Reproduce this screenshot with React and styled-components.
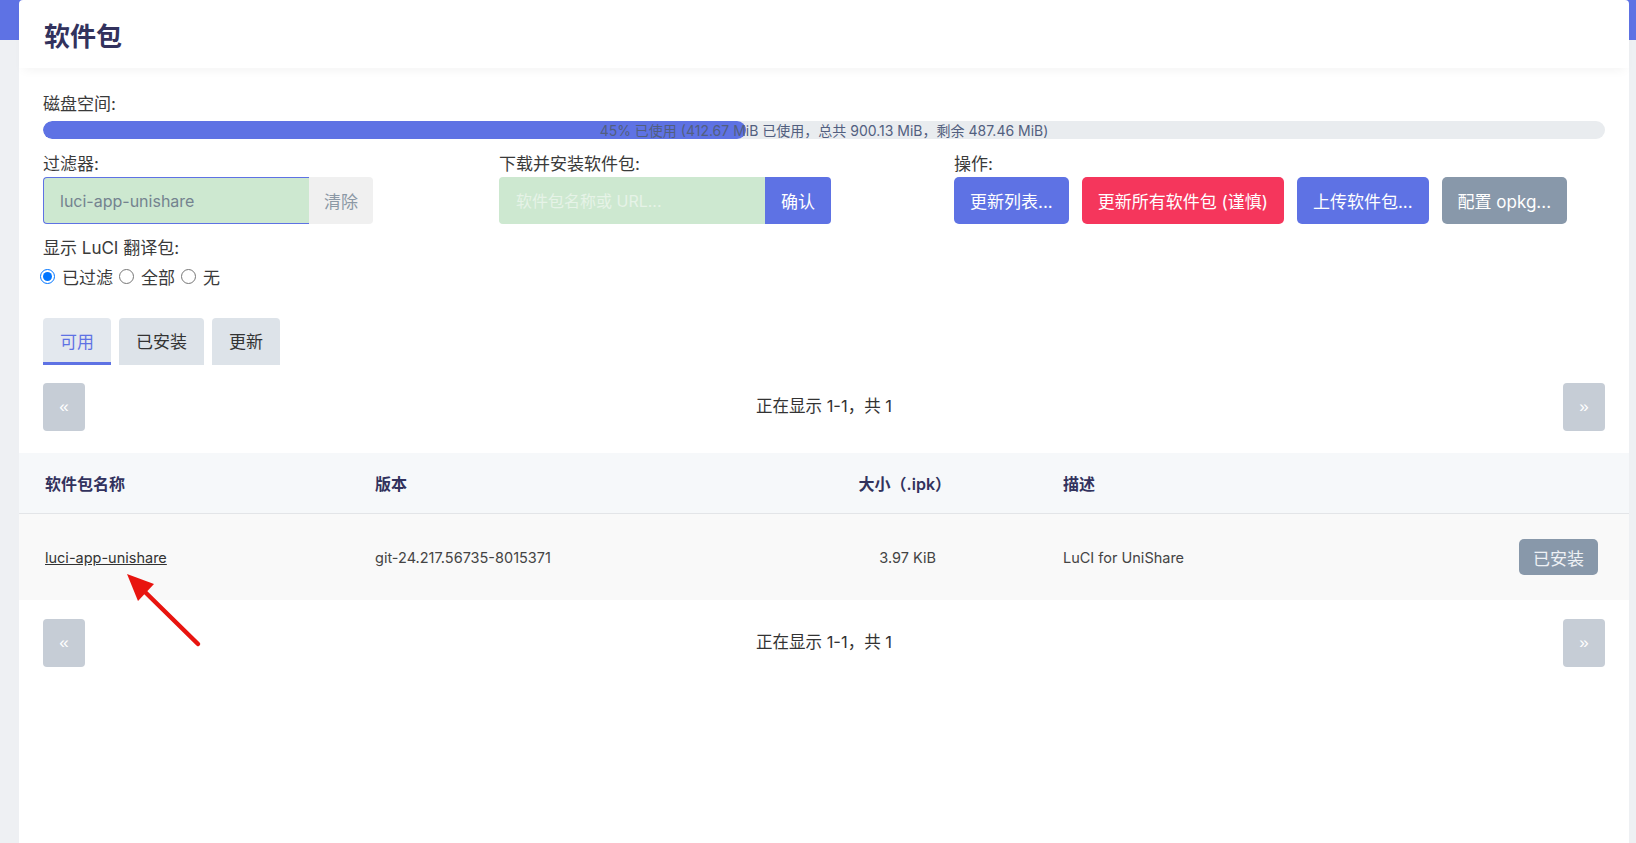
import styled, { createGlobalStyle } from "styled-components";

const GlobalStyle = createGlobalStyle`
  html, body {
    margin: 0;
    padding: 0;
  }
  body {
    font-family: Inter, "Noto Sans CJK SC", sans-serif;
    color: #333;
    background: #eef0f3;
  }
  * { box-sizing: border-box; }
`;

const Page = styled.div`
  min-height: 100vh;
  padding: 0 7px 0 19px;
  background: linear-gradient(#5e72e4 0 40px, #eef0f3 40px);
`;

const Card = styled.div`
  position: relative;
  min-height: 100vh;
  background: #fff;
  border-radius: 4px 4px 0 0;
`;

const CardHeader = styled.div`
  height: 68px;
  display: flex;
  align-items: center;
  padding: 0 25px;
  box-shadow: 0 6px 10px -4px rgba(0, 0, 0, 0.05);
`;

const Title = styled.h2`
  margin: 0;
  font-size: 26px;
  font-weight: 700;
  color: #32325d;
`;

const Section = styled.div`
  padding: ${(p) => p.$pad || "24px 24px 0"};
`;

const Label = styled.div`
  font-size: 17px;
  line-height: 24px;
  color: #3a3a3a;
  margin-bottom: ${(p) => p.$mb || "0"};
  margin-top: ${(p) => p.$mt || "0"};
`;

const Bar = styled.div`
  position: relative;
  margin-top: 5px;
  height: 18px;
  border-radius: 9px;
  background: #e9ecef;
  display: flex;
  align-items: center;
  justify-content: center;
  overflow: hidden;
`;

const Fill = styled.div`
  position: absolute;
  left: 0;
  top: 0;
  bottom: 0;
  background: #5e72e4;
  border-radius: 9px;
`;

const BarText = styled.span`
  position: relative;
  font-size: 14px;
  color: #525f7f;
`;

const Controls = styled.div`
  display: grid;
  grid-template-columns: 456px 455px 1fr;
  margin-top: 13px;
`;

const Group = styled.div`
  display: flex;
  flex-direction: column;
`;

const InputRow = styled.div`
  display: flex;
  height: 47px;
`;

const Input = styled.input`
  width: 266px;
  height: 47px;
  border: 1px solid ${(p) => (p.$focus ? "#5e72e4" : "#cde8d0")};
  border-right: none;
  border-radius: 4px 0 0 4px;
  background: #cde8d0;
  padding: 0 16px;
  font-family: Inter, "Noto Sans CJK SC", sans-serif;
  font-size: 16px;
  color: #74838f;
  outline: none;
  &::placeholder {
    color: #e6f3e7;
  }
`;

const AddonButton = styled.button`
  width: ${(p) => p.$w}px;
  height: 47px;
  border: none;
  border-radius: 0 4px 4px 0;
  background: ${(p) => (p.$primary ? "#5e72e4" : "#f0f0f0")};
  color: ${(p) => (p.$primary ? "#fff" : "#8b98a5")};
  font-family: Inter, "Noto Sans CJK SC", sans-serif;
  font-size: 17px;
  padding: 0;
`;

const Actions = styled.div`
  display: flex;
  gap: 13px;
`;

const ActionButton = styled.button`
  height: 47px;
  padding: 0 16px;
  border: none;
  border-radius: 5px;
  background: ${(p) => p.$bg};
  color: #fff;
  font-family: Inter, "Noto Sans CJK SC", sans-serif;
  font-size: 17px;
  white-space: nowrap;
`;

const Radios = styled.div`
  display: flex;
  align-items: center;
  height: 24px;
  margin-top: 4px;
  font-size: 17px;
  color: #3a3a3a;
`;

const RadioLabel = styled.label`
  display: flex;
  align-items: center;
  margin-right: 9px;
`;

const Radio = styled.input`
  width: 15px;
  height: 15px;
  margin: 0 7px 0 -3px;
`;

const Tabs = styled.div`
  display: flex;
  gap: 8px;
  margin-top: 30px;
`;

const Tab = styled.div`
  height: 47px;
  padding: 0 17px;
  display: flex;
  align-items: center;
  font-size: 17px;
  border-radius: 4px 4px 0 0;
  background: ${(p) => (p.$active ? "#e3e8ee" : "#dde3e9")};
  color: ${(p) => (p.$active ? "#5e72e4" : "#333")};
  border-bottom: 3px solid ${(p) => (p.$active ? "#5e72e4" : "transparent")};
`;

const Pager = styled.div`
  display: flex;
  align-items: center;
  justify-content: space-between;
  margin-top: ${(p) => p.$mt || "0"};
`;

const PageButton = styled.button`
  width: 42px;
  height: 48px;
  border: none;
  border-radius: 4px;
  background: #c6cdd6;
  color: #fff;
  font-size: 17px;
  padding: 0;
`;

const PageInfo = styled.span`
  font-size: 16.5px;
  color: #333;
  margin-top: -4px;
`;

const Table = styled.div`
  margin-top: 22px;
`;

const TRow = styled.div`
  display: grid;
  grid-template-columns: 330px 430px 258px 1fr 140px;
  align-items: center;
  height: ${(p) => (p.$head ? "61px" : "86px")};
  background: ${(p) => (p.$head ? "#f6f8fa" : "#f9f9f9")};
  border-bottom: ${(p) => (p.$head ? "1px solid #e3e5e8" : "none")};
`;

const Cell = styled.div`
  padding-left: ${(p) => p.$pl || "26px"};
  padding-right: ${(p) => p.$pr || "0"};
  text-align: ${(p) => p.$align || "left"};
  font-size: ${(p) => (p.$head ? "16px" : "14.5px")};
  font-weight: ${(p) => (p.$head ? 600 : 400)};
  color: ${(p) => (p.$head ? "#32325d" : "#444")};
  display: ${(p) => (p.$flex ? "flex" : "block")};
  justify-content: flex-end;
`;

const PkgLink = styled.a`
  color: #333;
  text-decoration: underline;
`;

const InstalledButton = styled.button`
  width: 79px;
  height: 36px;
  border: none;
  border-radius: 5px;
  background: #8898aa;
  color: #eef1f5;
  font-family: Inter, "Noto Sans CJK SC", sans-serif;
  font-size: 17px;
  padding: 0;
`;

const Arrow = styled.svg`
  position: absolute;
  left: 95px;
  top: 560px;
`;

const disk = { pct: 45, used: "412.67", total: "900.13", free: "487.46" };

export default function App() {
  return (
    <Page>
      <GlobalStyle />
      <Card>
        <CardHeader>
          <Title>软件包</Title>
        </CardHeader>

        <Section>
          <Label>磁盘空间:</Label>
          <Bar>
            <Fill style={{ width: `${disk.pct}%` }} />
            <BarText>
              {disk.pct}% 已使用 ({disk.used} MiB 已使用，总共 {disk.total} MiB，剩余 {disk.free} MiB)
            </BarText>
          </Bar>

          <Controls>
            <Group>
              <Label $mb="1px">过滤器:</Label>
              <InputRow>
                <Input $focus defaultValue="luci-app-unishare" />
                <AddonButton $w={64}>清除</AddonButton>
              </InputRow>
            </Group>
            <Group>
              <Label $mb="1px">下载并安装软件包:</Label>
              <InputRow>
                <Input placeholder="软件包名称或 URL..." />
                <AddonButton $w={66} $primary>
                  确认
                </AddonButton>
              </InputRow>
            </Group>
            <Group>
              <Label $mb="1px">操作:</Label>
              <Actions>
                <ActionButton $bg="#5e72e4">更新列表...</ActionButton>
                <ActionButton $bg="#f5365c">更新所有软件包 (谨慎)</ActionButton>
                <ActionButton $bg="#5e72e4">上传软件包...</ActionButton>
                <ActionButton $bg="#8898aa">配置 opkg...</ActionButton>
              </Actions>
            </Group>
          </Controls>

          <Label $mt="12px">显示 LuCI 翻译包:</Label>
          <Radios>
            <RadioLabel>
              <Radio type="radio" name="i18n" defaultChecked />
              已过滤
            </RadioLabel>
            <RadioLabel>
              <Radio type="radio" name="i18n" />
              全部
            </RadioLabel>
            <RadioLabel>
              <Radio type="radio" name="i18n" />
              无
            </RadioLabel>
          </Radios>

          <Tabs>
            <Tab $active>可用</Tab>
            <Tab>已安装</Tab>
            <Tab>更新</Tab>
          </Tabs>

          <Pager $mt="18px">
            <PageButton>«</PageButton>
            <PageInfo>正在显示 1-1，共 1</PageInfo>
            <PageButton>»</PageButton>
          </Pager>
        </Section>

        <Table>
          <TRow $head>
            <Cell $head>软件包名称</Cell>
            <Cell $head>版本</Cell>
            <Cell $head $align="right" $pr="86px">
              大小（.ipk）
            </Cell>
            <Cell $head>描述</Cell>
            <Cell $head />
          </TRow>
          <TRow>
            <Cell>
              <PkgLink href="#">luci-app-unishare</PkgLink>
            </Cell>
            <Cell>git-24.217.56735-8015371</Cell>
            <Cell $align="right" $pr="101px">
              3.97 KiB
            </Cell>
            <Cell>LuCI for UniShare</Cell>
            <Cell $flex $pr="31px">
              <InstalledButton>已安装</InstalledButton>
            </Cell>
          </TRow>
        </Table>

        <Section $pad="19px 24px 0">
          <Pager>
            <PageButton>«</PageButton>
            <PageInfo>正在显示 1-1，共 1</PageInfo>
            <PageButton>»</PageButton>
          </Pager>
        </Section>

        <Arrow width="100" height="100" viewBox="0 0 100 100">
          <line x1="28" y1="29" x2="84" y2="84" stroke="#e8140f" strokeWidth="4.5" strokeLinecap="round" />
          <polygon points="13,14 40,24 24,41" fill="#e8140f" />
        </Arrow>
      </Card>
    </Page>
  );
}
